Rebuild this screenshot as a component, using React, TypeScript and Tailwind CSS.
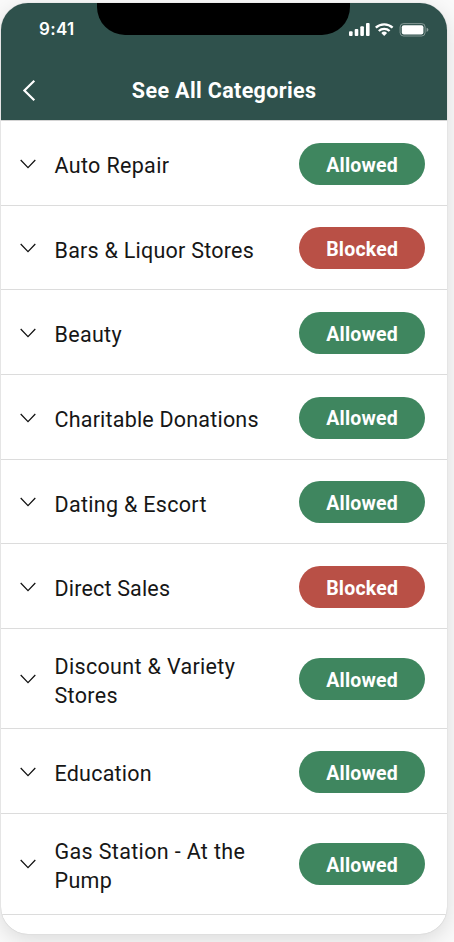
import { useState } from "react";

type Status = "Allowed" | "Blocked";

interface Category {
  name: string;
  status: Status;
  // letter spacing of the label
  tracking: string;
}

const CATEGORIES: Category[] = [
  { name: "Auto Repair", status: "Allowed", tracking: "tracking-[0.34px]" },
  { name: "Bars & Liquor Stores", status: "Blocked", tracking: "tracking-[0.24px]" },
  { name: "Beauty", status: "Allowed", tracking: "tracking-[0.3px]" },
  { name: "Charitable Donations", status: "Allowed", tracking: "tracking-[0.2px]" },
  { name: "Dating & Escort", status: "Allowed", tracking: "tracking-[0.3px]" },
  { name: "Direct Sales", status: "Blocked", tracking: "tracking-[0.17px]" },
  { name: "Discount & Variety Stores", status: "Allowed", tracking: "tracking-[0.33px]" },
  { name: "Education", status: "Allowed", tracking: "tracking-[0.22px]" },
  { name: "Gas Station - At the Pump", status: "Allowed", tracking: "tracking-[0.35px]" },
];

const StatusIcons = () => (
  <svg width="80" height="14" viewBox="0 0 80 14" fill="#fff">
    {/* Signal */}
    <rect x="0" y="8.3" width="3.6" height="4.7" rx="1" />
    <rect x="5.7" y="6" width="3.6" height="7" rx="1" />
    <rect x="11.3" y="3.2" width="3.6" height="9.8" rx="1" />
    <rect x="17" y="0" width="3.6" height="13" rx="1" />
    {/* Wifi */}
    <g fill="none" stroke="#fff" strokeWidth="2.3">
      <path d="M26.8 4.7A12.1 12.1 0 0 1 43.6 4.7" />
      <path d="M29.8 8A7.8 7.8 0 0 1 40.6 8" />
    </g>
    <path d="M35.2 12.9 32.3 10A4.2 4.2 0 0 1 38.1 10Z" />
    {/* Battery */}
    <rect x="51.1" y="0.6" width="25" height="12.4" rx="3.4" fill="none" stroke="#fff" strokeOpacity="0.4" />
    <rect x="52.8" y="2.2" width="21.6" height="9.2" rx="2" />
    <path d="M77.6 4.7Q79.4 5.3 79.4 6.8T77.6 8.9Z" fillOpacity="0.45" />
  </svg>
);

const Header = () => (
  <header className="relative h-[117px] shrink-0 bg-[#2f514c] text-white">
    {/* Notch */}
    <div className="absolute top-0 left-[96px] h-8 w-[253px] rounded-b-[28px] bg-black" />
    <div className="flex h-[54px] items-center justify-between pr-[18px] pl-[38px]">
      <span className="font-[Inter] text-[17px] font-semibold tracking-[0.3px]">9:41</span>
      <StatusIcons />
    </div>
    <div className="relative flex h-[66px] items-center justify-center">
      <button type="button" aria-label="Back" className="absolute left-[21px]">
        <svg width="14" height="21" viewBox="0 0 14 21" fill="none" stroke="#fff" strokeWidth="2.2">
          <path d="M12.3 0.8 2.4 10.5 12.3 20.2" />
        </svg>
      </button>
      <h1 className="pt-[2px] text-[21.5px] font-bold tracking-[0.36px] whitespace-nowrap">See All Categories</h1>
    </div>
  </header>
);

const CategoryRow = ({ name, status, tracking }: Category) => {
  const [current, setCurrent] = useState(status);

  const handleToggle = () => setCurrent(current === "Allowed" ? "Blocked" : "Allowed");

  return (
    <li className="flex h-[84.67px] items-center border-b border-[#dcdcdc] pt-[1.6px] pr-[22px] pl-[19px] [&:nth-child(7)]:h-[100.2px] [&:nth-child(9)]:h-[100.8px]">
      <svg width="16" height="10" viewBox="0 0 16 10" fill="none" stroke="#111" strokeWidth="1.25" className="shrink-0">
        <path d="M0.7 1 8 8.6 15.3 1" />
      </svg>
      <span className={`mt-[4px] ml-[18.5px] w-[216px] text-[21.5px] leading-[29px] ${tracking}`}>{name}</span>
      <button
        type="button"
        onClick={handleToggle}
        className={`ml-auto h-[42px] w-[126.3px] shrink-0 rounded-full pt-[3px] text-[19.5px] font-bold tracking-[0.2px] text-white ${
          current === "Allowed" ? "bg-[#3f865f]" : "bg-[#b95046]"
        }`}
      >
        {current}
      </button>
    </li>
  );
};

const App = () => {
  return (
    <div className="h-[942px] overflow-hidden bg-[#fafafa] pt-[3px] pl-px font-[Roboto,sans-serif]">
      <div className="flex h-[931px] w-[446.3px] flex-col overflow-hidden rounded-[27px] bg-white text-[#161616] shadow-[0_6px_22px_rgba(0,0,0,0.13),0_0_1px_rgba(0,0,0,0.25)]">
        <Header />
        <ul className="border-t border-[#d4d4d4]">
          {CATEGORIES.map((category) => (
            <CategoryRow key={category.name} {...category} />
          ))}
        </ul>
      </div>
    </div>
  );
};

export default App;
